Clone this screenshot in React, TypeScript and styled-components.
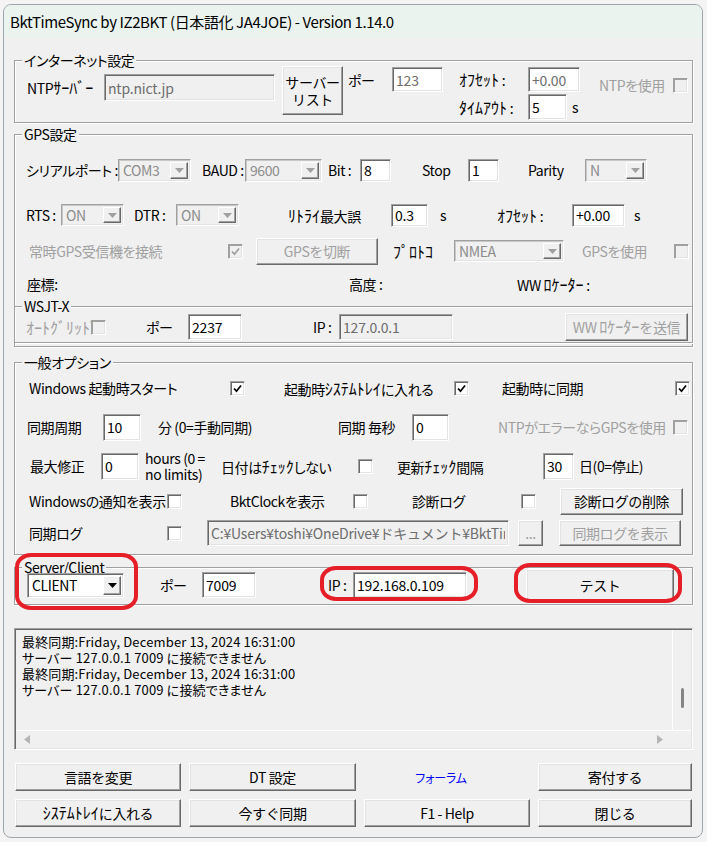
import React from 'react'
import styled, { createGlobalStyle } from 'styled-components'

const GlobalStyle = createGlobalStyle`
	* {
		box-sizing: border-box;
	}
	html,
	body {
		margin: 0;
		padding: 0;
		background: #f4f4f4;
	}
	body {
		font-family: 'Noto Sans CJK JP', 'Liberation Sans', sans-serif;
		font-size: 14px;
		color: #000;
	}
`

const Window = styled.div`
	width: 700px;
	height: 834px;
	margin: 4px 0 0 3px;
	border: 1px solid #9ea5aa;
	border-radius: 8px;
	background: #f0f0f0;
	overflow: hidden;
	font-feature-settings: 'palt';
	letter-spacing: -0.4px;
`
const TitleBar = styled.div`
	height: 33px;
	padding-left: 6px;
	display: flex;
	align-items: center;
	background: #eaf3ee;
	font-size: 15px;
	white-space: nowrap;
`
const Body = styled.div`
	padding: 16px 9px 0 10px;
`
// half-width katakana, drawn a little larger so they keep the height of the rest
const Kana = styled.span`
	font-size: 16px;
	letter-spacing: 0;
`
const Group = styled.fieldset<{ $mt?: number; $pb?: number }>`
	margin: ${(p) => p.$mt ?? 0}px 0 0;
	padding: 0 0 ${(p) => p.$pb ?? 0}px;
	min-width: 0;
	border: 1px solid #a0a0a0;
	box-shadow: inset 1px 1px 0 #fff, 1px 1px 0 #fff;
`
const SubGroup = styled(Group)`
	margin: 4px -1px 0;
`
const Legend = styled.legend`
	margin-left: 7px;
	padding: 0 2px;
	height: 12px;
	line-height: 12px;
	background: #f0f0f0;
	white-space: nowrap;
`
const Row = styled.div<{ $h: number; $mt?: number }>`
	display: flex;
	align-items: center;
	height: ${(p) => p.$h}px;
	margin-top: ${(p) => p.$mt ?? 0}px;
	white-space: nowrap;
`
const InetRow = styled.div`
	display: flex;
	align-items: flex-start;
	height: 56px;
	white-space: nowrap;
`
const Cluster = styled.div<{ $h: number; $mt?: number; $ml?: number }>`
	flex: none;
	display: flex;
	align-items: center;
	height: ${(p) => p.$h}px;
	margin-top: ${(p) => p.$mt ?? 0}px;
	margin-left: ${(p) => p.$ml ?? 0}px;
`
const Stack = styled.div<{ $ml?: number }>`
	flex: none;
	display: flex;
	flex-direction: column;
	margin-left: ${(p) => p.$ml ?? 0}px;
`
const Label = styled.span<{ $w?: number; $pl?: number; $dim?: boolean }>`
	flex: none;
	width: ${(p) => (p.$w ? `${p.$w}px` : 'auto')};
	padding-left: ${(p) => p.$pl ?? 0}px;
	line-height: 16px;
	color: ${(p) => (p.$dim ? '#a0a0a0' : '#000')};
	white-space: nowrap;
`
const TwoLine = styled(Label)`
	white-space: pre;
	line-height: 16px;
`
const Field = styled.input<{ $w: number; $h?: number; $ml?: number; $grey?: boolean }>`
	flex: none;
	width: ${(p) => p.$w}px;
	height: ${(p) => p.$h ?? 26}px;
	margin: 0 0 0 ${(p) => p.$ml ?? 0}px;
	padding: 0 3px;
	font-family: inherit;
	font-size: 14px;
	letter-spacing: -0.2px;
	color: ${(p) => (p.$grey ? '#6d6d6d' : '#000')};
	background: #fff;
	border: 1px solid;
	border-color: #a0a0a0 #fff #fff #a0a0a0;
	box-shadow: inset 1px 1px 0 #696969, inset -1px -1px 0 #e3e3e3;
	outline: none;
	&:disabled {
		background: #f0f0f0;
		color: #6d6d6d;
	}
`
const Box = styled.span<{ $off?: boolean }>`
	flex: none;
	width: 15px;
	height: 15px;
	display: inline-flex;
	align-items: center;
	justify-content: center;
	background: ${(p) => (p.$off ? '#f0f0f0' : '#fff')};
	border: 1px solid;
	border-color: #a0a0a0 #fff #fff #a0a0a0;
	box-shadow: inset 1px 1px 0 ${(p) => (p.$off ? '#a0a0a0' : '#696969')},
		inset -1px -1px 0 #e3e3e3;
`
const Btn = styled.button<{ $w?: number; $h?: number; $ml?: number }>`
	flex: none;
	width: ${(p) => (p.$w ? `${p.$w}px` : '100%')};
	height: ${(p) => p.$h ?? 28}px;
	margin: 0 0 0 ${(p) => p.$ml ?? 0}px;
	padding: 0;
	font-family: inherit;
	font-size: 14px;
	line-height: 17px;
	letter-spacing: -0.4px;
	color: #000;
	background: #f0f0f0;
	border: 1px solid;
	border-color: #fff #696969 #696969 #fff;
	box-shadow: inset -1px -1px 0 #a0a0a0, inset 1px 1px 0 #e3e3e3;
	white-space: pre;
	&:disabled {
		color: #a0a0a0;
	}
`
const Combo = styled.div<{ $w: number; $h?: number; $off?: boolean }>`
	flex: none;
	display: flex;
	width: ${(p) => p.$w}px;
	height: ${(p) => p.$h ?? 23}px;
	background: ${(p) => (p.$off ? '#f0f0f0' : '#fff')};
	border: 1px solid;
	border-color: #a0a0a0 #fff #fff #a0a0a0;
	box-shadow: inset 1px 1px 0 ${(p) => (p.$off ? '#c8c8c8' : '#696969')},
		inset -1px -1px 0 #e3e3e3;
	padding: 1px 2px;
`
const ComboText = styled.span<{ $off?: boolean }>`
	flex: 1;
	padding-left: 2px;
	display: flex;
	align-items: center;
	line-height: 16px;
	color: ${(p) => (p.$off ? '#8c8c8c' : '#000')};
`
const ComboArrow = styled.span`
	flex: none;
	width: 18px;
	margin: 1px 0;
	display: flex;
	align-items: center;
	justify-content: center;
	background: #f0f0f0;
	border: 1px solid;
	border-color: #fff #696969 #696969 #fff;
	box-shadow: inset -1px -1px 0 #a0a0a0;
`
const ServerArea = styled.div`
	position: relative;
	margin-top: 6px;
`
const Mark = styled.div<{ $x: number; $y: number; $w: number; $h: number }>`
	position: absolute;
	left: ${(p) => p.$x}px;
	top: ${(p) => p.$y}px;
	width: ${(p) => p.$w}px;
	height: ${(p) => p.$h}px;
	border: 4px solid #e61e27;
	border-radius: 16px / 14px;
	pointer-events: none;
`
const LogBox = styled.div`
	margin-top: 23px;
	height: 122px;
	display: flex;
	flex-direction: column;
	border: 1px solid;
	border-color: #a0a0a0 #fff #fff #a0a0a0;
	box-shadow: inset 1px 1px 0 #696969, inset -1px -1px 0 #e3e3e3;
	padding: 1px;
	background: #f0f0f0;
`
const LogMain = styled.div`
	flex: 1;
	display: flex;
	min-height: 0;
`
const LogText = styled.div`
	flex: 1;
	padding: 4px 0 0 6px;
	font-size: 13px;
	line-height: 16px;
	letter-spacing: 0.15px;
	white-space: nowrap;
`
const VScroll = styled.div`
	flex: none;
	width: 19px;
	border-left: 1px solid #fff;
	display: flex;
	justify-content: center;
`
const Thumb = styled.div`
	width: 3px;
	height: 20px;
	margin-top: 58px;
	border-radius: 2px;
	background: #858585;
`
const HScroll = styled.div`
	flex: none;
	height: 18px;
	display: flex;
	border-top: 1px solid #fff;
`
const HTrack = styled.div`
	flex: 1;
	display: flex;
	align-items: center;
	justify-content: space-between;
	padding: 0 9px 0 8px;
`
const Corner = styled.div`
	flex: none;
	width: 19px;
`
const Footer = styled.div`
	margin-top: 13px;
	padding-left: 1px;
	display: grid;
	grid-template-columns: 166px 167px 166px 154px;
	grid-auto-rows: 28px;
	gap: 8px;
`
const ForumLink = styled.a`
	display: flex;
	align-items: center;
	justify-content: center;
	padding-right: 12px;
	color: #0000ff;
	font-size: 12px;
	letter-spacing: -0.2px;
	text-decoration: none;
`

const Tick = ({ off }: { off?: boolean }) => (
	<svg width="9" height="9" viewBox="0 0 9 9">
		<path
			d="M1 4.5 L3.5 7.2 L8 1.5"
			fill="none"
			stroke={off ? '#a0a0a0' : '#000'}
			strokeWidth="1.7"
		/>
	</svg>
)

const Check = ({ on, off }: { on?: boolean; off?: boolean }) => (
	<Box $off={off}>{on && <Tick off={off} />}</Box>
)

const Select = ({
	w,
	h,
	off,
	value,
}: {
	w: number
	h?: number
	off?: boolean
	value: string
}) => (
	<Combo $w={w} $h={h} $off={off}>
		<ComboText $off={off}>{value}</ComboText>
		<ComboArrow>
			<svg width="9" height="5" viewBox="0 0 9 5">
				<path d="M0 0h9L4.5 5z" fill={off ? '#a0a0a0' : '#000'} />
			</svg>
		</ComboArrow>
	</Combo>
)

const Arrow = ({ dir }: { dir: 'l' | 'r' }) => (
	<svg width="6" height="9" viewBox="0 0 6 9">
		<path d={dir === 'l' ? 'M6 0v9L0 4.5z' : 'M0 0v9L6 4.5z'} fill="#b4b4b4" />
	</svg>
)

const logLines = [
	'最終同期:Friday, December 13, 2024 16:31:00',
	'サーバー 127.0.0.1 7009 に接続できません',
	'最終同期:Friday, December 13, 2024 16:31:00',
	'サーバー 127.0.0.1 7009 に接続できません',
]

const App = () => {
	return (
		<Window>
			<GlobalStyle />
			<TitleBar>BktTimeSync by IZ2BKT (日本語化 JA4JOE) - Version 1.14.0</TitleBar>
			<Body>
				<Group>
					<Legend>インターネット設定</Legend>
					<InetRow>
						<Cluster $h={27} $mt={8}>
							<Label $w={89} $pl={12}>
								NTP<Kana>ｻｰﾊﾞｰ</Kana>
							</Label>
							<Field $w={171} $h={27} disabled defaultValue="ntp.nict.jp" />
						</Cluster>
						<Btn $w={61} $h={49} $ml={7}>
							{'サーバー\nリスト'}
						</Btn>
						<Cluster $h={25} $mt={1}>
							<Label $w={49} $pl={5}>
								ポー
							</Label>
							<Field $w={51} $h={25} $grey readOnly defaultValue="123" />
						</Cluster>
						<Stack $ml={16}>
							<Cluster $h={25} $mt={1}>
								<Label $w={69}>
									<Kana>ｵﾌｾｯﾄ</Kana> :
								</Label>
								<Field $w={52} $h={25} $grey readOnly defaultValue="+0.00" />
							</Cluster>
							<Cluster $h={26} $mt={2}>
								<Label $w={69}>
									<Kana>ﾀｲﾑｱｳﾄ</Kana> :
								</Label>
								<Field $w={39} $h={26} readOnly defaultValue="5" />
								<Label $pl={5}>s</Label>
							</Cluster>
						</Stack>
						<Cluster $h={26} $mt={6} $ml={19}>
							<Label $w={74} $dim>
								NTPを使用
							</Label>
							<Check off />
						</Cluster>
					</InetRow>
				</Group>

				<Group $mt={5} $pb={3}>
					<Legend>GPS設定</Legend>
					<Row $h={60}>
						<Label $w={103} $pl={11}>
							シリアルポート :
						</Label>
						<Select w={73} off value="COM3" />
						<Label $w={54} $pl={11}>
							BAUD :
						</Label>
						<Select w={77} off value="9600" />
						<Label $w={38} $pl={6}>
							Bit :
						</Label>
						<Field $w={31} $h={23} readOnly defaultValue="8" />
						<Label $w={77} $pl={31}>
							Stop
						</Label>
						<Field $w={31} $h={23} readOnly defaultValue="1" />
						<Label $w={86} $pl={29}>
							Parity
						</Label>
						<Select w={62} off value="N" />
					</Row>
					<Row $h={30}>
						<Label $w={46} $pl={11}>
							RTS :
						</Label>
						<Select w={63} h={22} off value="ON" />
						<Label $w={52} $pl={10}>
							DTR :
						</Label>
						<Select w={63} h={22} off value="ON" />
						<Label $w={152} $pl={49}>
							<Kana>ﾘﾄﾗｲ</Kana>最大誤
						</Label>
						<Field $w={37} $h={23} readOnly defaultValue="0.3" />
						<Label $w={69} $pl={12}>
							s
						</Label>
						<Label $w={75}>
							<Kana>ｵﾌｾｯﾄ</Kana> :
						</Label>
						<Field $w={53} $h={23} readOnly defaultValue="+0.00" />
						<Label $pl={9}>s</Label>
					</Row>
					<Row $h={42}>
						<Label $w={213} $pl={14} $dim>
							常時GPS受信機を接続
						</Label>
						<Check on off />
						<Btn $w={122} $h={27} $ml={13} disabled>
							GPSを切断
						</Btn>
						<Label $w={76} $pl={15}>
							<Kana>ﾌﾟﾛﾄｺ</Kana>
						</Label>
						<Select w={110} h={22} off value="NMEA" />
						<Label $w={110} $pl={18} $dim>
							GPSを使用
						</Label>
						<Check off />
					</Row>
					<Row $h={24}>
						<Label $w={334} $pl={12}>
							座標:
						</Label>
						<Label $w={168}>高度 :</Label>
						<Label>
							WW <Kana>ﾛｹｰﾀｰ</Kana> :
						</Label>
					</Row>
					<SubGroup>
						<Legend>WSJT-X</Legend>
						<Row $h={30}>
							<Label $w={76} $pl={11} $dim>
								<Kana>ｵｰﾄｸﾞﾘｯﾄﾞ</Kana>
							</Label>
							<Check off />
							<Label $w={82} $pl={40}>
								ポー
							</Label>
							<Field $w={54} $h={26} readOnly defaultValue="2237" />
							<Label $w={97} $pl={71}>
								IP :
							</Label>
							<Field $w={114} $h={26} disabled defaultValue="127.0.0.1" />
							<Btn $w={123} $h={28} $ml={112} disabled>
								WW <Kana>ﾛｹｰﾀｰ</Kana>を送信
							</Btn>
						</Row>
					</SubGroup>
				</Group>

				<Group $mt={9} $pb={4}>
					<Legend>一般オプション</Legend>
					<Row $h={40}>
						<Label $w={215} $pl={14}>
							Windows 起動時スタート
						</Label>
						<Check on />
						<Label $w={209} $pl={39}>
							起動時<Kana>ｼｽﾃﾑﾄﾚｲ</Kana>に入れる
						</Label>
						<Check on />
						<Label $w={206} $pl={33}>
							起動時に同期
						</Label>
						<Check on />
					</Row>
					<Row $h={38}>
						<Label $w={88} $pl={12}>
							同期周期
						</Label>
						<Field $w={38} $h={27} readOnly defaultValue="10" />
						<Label $w={197} $pl={17}>
							分 (0=手動同期)
						</Label>
						<Label $w={74}>同期 毎秒</Label>
						<Field $w={37} $h={27} readOnly defaultValue="0" />
						<Label $w={224} $pl={49} $dim>
							NTPがエラーならGPSを使用
						</Label>
						<Check off />
					</Row>
					<Row $h={40}>
						<Label $w={86} $pl={15}>
							最大修正
						</Label>
						<Field $w={38} $h={27} readOnly defaultValue="0" />
						<TwoLine $w={82} $pl={6}>
							{'hours (0 =\nno limits)'}
						</TwoLine>
						<Label $w={137}>
							日付は<Kana>ﾁｪｯｸ</Kana>しない
						</Label>
						<Check />
						<Label $w={170} $pl={24}>
							更新<Kana>ﾁｪｯｸ</Kana>間隔
						</Label>
						<Field $w={31} $h={27} readOnly defaultValue="30" />
						<Label $pl={5}>日(0=停止)</Label>
					</Row>
					<Row $h={30}>
						<Label $w={152} $pl={14}>
							Windowsの通知を表示
						</Label>
						<Check />
						<Label $w={171} $pl={48}>
							BktClockを表示
						</Label>
						<Check />
						<Label $w={153} $pl={44}>
							診断ログ
						</Label>
						<Check />
						<Btn $w={123} $h={27} $ml={24}>
							診断ログの削除
						</Btn>
					</Row>
					<Row $h={34}>
						<Label $w={152} $pl={14}>
							同期ログ
						</Label>
						<Check />
						<Field
							$w={302}
							$h={26}
							$ml={25}
							disabled
							defaultValue="C:¥Users¥toshi¥OneDrive¥ドキュメント¥BktTimeSync"
						/>
						<Btn $w={25} $h={26} $ml={9} disabled>
							...
						</Btn>
						<Btn $w={122} $h={26} $ml={16} disabled>
							同期ログを表示
						</Btn>
					</Row>
				</Group>

				<ServerArea>
					<Group $pb={3}>
						<Legend>Server/Client</Legend>
						<Row $h={32} $mt={-4}>
							<Cluster $h={25} $ml={12}>
								<Select w={97} h={25} value="CLIENT" />
							</Cluster>
							<Label $w={78} $pl={36}>
								ポー
							</Label>
							<Field $w={54} $h={26} readOnly defaultValue="7009" />
							<Label $w={97} $pl={72}>
								IP :
							</Label>
							<Field $w={114} $h={26} readOnly defaultValue="192.168.0.109" />
							<Btn $w={148} $h={32} $ml={59}>
								テスト
							</Btn>
						</Row>
					</Group>
					<Mark $x={1} $y={-8} $w={123} $h={57} />
					<Mark $x={306} $y={5} $w={158} $h={35} />
					<Mark $x={500} $y={2} $w={168} $h={40} />
				</ServerArea>

				<LogBox>
					<LogMain>
						<LogText>
							{logLines.map((line, i) => (
								<div key={i}>{line}</div>
							))}
						</LogText>
						<VScroll>
							<Thumb />
						</VScroll>
					</LogMain>
					<HScroll>
						<HTrack>
							<Arrow dir="l" />
							<Arrow dir="r" />
						</HTrack>
						<Corner />
					</HScroll>
				</LogBox>

				<Footer>
					<Btn>言語を変更</Btn>
					<Btn>DT 設定</Btn>
					<ForumLink href="#">フォーラム</ForumLink>
					<Btn>寄付する</Btn>
					<Btn>
						<Kana>ｼｽﾃﾑﾄﾚｲ</Kana>に入れる
					</Btn>
					<Btn>今すぐ同期</Btn>
					<Btn>F1 - Help</Btn>
					<Btn>閉じる</Btn>
				</Footer>
			</Body>
		</Window>
	)
}

export default App
